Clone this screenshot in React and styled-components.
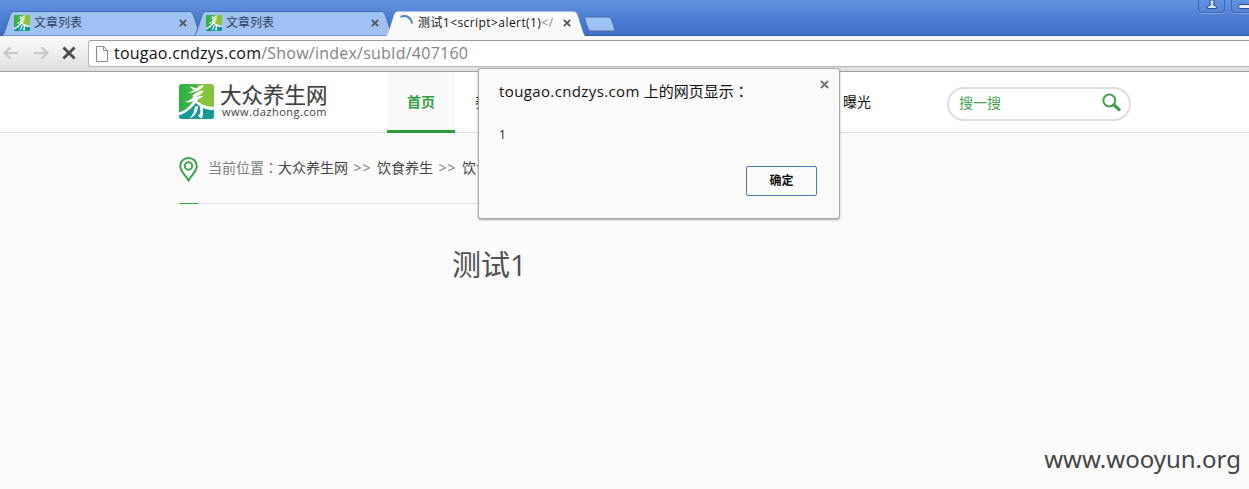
import React from 'react';
import styled, { createGlobalStyle, css } from 'styled-components';

const Global = createGlobalStyle`
  * { box-sizing: border-box; }
  html, body { margin: 0; padding: 0; overflow: hidden; }
  body {
    font-family: "Open Sans", "Noto Sans CJK SC", sans-serif;
    background: #fbfbfb;
  }
  svg { display: block; flex: none; }
`;

const Screen = styled.div`
  position: relative;
  width: 1249px;
  height: 489px;
  overflow: hidden;
  display: flex;
  flex-direction: column;
  background: #fbfbfb;
`;

/* browser chrome */
const TabStrip = styled.div`
  height: 36px;
  flex: none;
  display: flex;
  align-items: flex-end;
  background: linear-gradient(#6293e0, #4a7ad0 60%, #426fc6);
  border-bottom: 1px solid #38599a;
  padding-left: 2px;
`;

const TabBox = styled.div`
  position: relative;
  width: 199px;
  height: 24px;
  margin-right: -7px;
  z-index: 1;
  display: flex;
  align-items: center;
  padding: 0 14px 0 12px;
  ${(p) => p.$active && css`
    height: 25px;
    margin-bottom: -1px;
    padding-bottom: 1px;
    z-index: 2;
  `}
`;

const TabShape = styled.svg`
  position: absolute;
  left: 0;
  top: 0;
  z-index: -1;
`;

const TabTitle = styled.span`
  flex: 1;
  margin-left: 4px;
  font-size: 12px;
  line-height: 20px;
  height: 21px;
  white-space: nowrap;
  overflow: hidden;
  color: ${(p) => (p.$active ? '#111' : '#2b3d57')};
  letter-spacing: ${(p) => (p.$active ? '0.43px' : '0')};
`;

const Faded = styled.span`
  color: #888;
`;

const NewTab = styled.div`
  margin: 0 0 3px 2px;
`;

const WindowButtons = styled.div`
  align-self: flex-start;
  margin-left: auto;
  display: flex;
  gap: 6px;
  height: 13px;
`;

const WindowButton = styled.div`
  width: 27px;
  height: 13px;
  display: flex;
  justify-content: center;
  border: 1px solid #3f65ae;
  border-top: 0;
  border-radius: 0 0 4px 4px;
  box-shadow: 0 1px 0 #7fa6e6;
  ${(p) => p.$cut && css`
    width: 18px;
    border-right: 0;
    border-radius: 0 0 0 4px;
    justify-content: flex-end;
  `}
`;

const Toolbar = styled.div`
  height: 36px;
  flex: none;
  display: flex;
  align-items: flex-start;
  background: linear-gradient(#fafafa, #dfdfdf);
  border-bottom: 1px solid #a3a0a0;
  padding: 4px 0 0 3px;
`;

const NavIcons = styled.div`
  height: 26px;
  width: 85px;
  display: flex;
  align-items: center;
  gap: 13.500px;
`;

const Omnibox = styled.div`
  flex: 1;
  height: 27px;
  display: flex;
  align-items: center;
  padding-left: 7px;
  background: #fff;
  border: 1px solid #b9b5b5;
  border-top-color: #a09a9a;
  border-right: 0;
  border-radius: 3px 0 0 3px;
`;

const Url = styled.span`
  margin: 0 0 1px 6px;
  font-size: 16px;
  line-height: 24px;
  letter-spacing: 0.23px;
  color: #838383;
  white-space: nowrap;
`;

const Host = styled.span`
  color: #111;
`;

/* site */
const SiteHeader = styled.header`
  height: 61px;
  flex: none;
  display: flex;
  align-items: flex-start;
  padding-left: 179px;
  background: #fff;
  border-bottom: 1px solid #dfdfdf;
`;

const Brand = styled.div`
  width: 208px;
  display: flex;
  gap: 6px;
  padding-top: 12px;
`;

const BrandText = styled.div`
  display: flex;
  flex-direction: column;
  margin-top: -1px;
  color: #3d3d3d;
  white-space: nowrap;
`;

const BrandName = styled.div`
  font-family: "Noto Sans CJK SC", sans-serif;
  font-size: 21.500px;
  line-height: 22px;
  -webkit-text-stroke: 0.2px #3d3d3d;
`;

const BrandUrl = styled.div`
  margin-left: 2px;
  font-size: 11px;
  line-height: 14px;
  letter-spacing: 0.5px;
`;

const Nav = styled.nav`
  width: 504px;
  display: flex;
`;

const NavItem = styled.a`
  height: 61px;
  padding: 0 20px;
  font-size: 14px;
  line-height: 60px;
  color: #111;
  white-space: nowrap;
  ${(p) => p.$current && css`
    color: #319e3e;
    font-weight: 700;
    background: #fafafa;
    border-bottom: 3px solid #319e3e;
  `}
  ${(p) => p.$last && css`margin-left: auto;`}
`;

const Search = styled.div`
  width: 184px;
  height: 34px;
  margin: 15px 0 0 56px;
  display: flex;
  align-items: center;
  justify-content: space-between;
  padding: 0 8px 3px 10px;
  border: 2px solid #dedede;
  border-radius: 17px;
  font-size: 14px;
  line-height: 20px;
  color: #47a655;
`;

const Main = styled.main`
  flex: 1;
  display: flex;
  flex-direction: column;
  padding-left: 179px;
`;

const Crumbs = styled.div`
  width: 640px;
  height: 71px;
  flex: none;
  display: flex;
  align-items: center;
  font-size: 14px;
  line-height: 20px;
  color: #7c7c7c;
  white-space: nowrap;
  border-bottom: 1px solid #e2e2e2;
  & > svg { margin-top: 2px; }
`;

const CrumbLabel = styled.span`
  height: 20px;
  margin-left: 10px;
  width: 70px;
`;

const WideColon = styled.span`
  font-family: "Noto Sans CJK TC", sans-serif;
  line-height: 1;
`;

const Crumb = styled.span`
  height: 20px;
  color: #444;
`;

const Sep = styled.span`
  height: 20px;
  width: 29px;
  text-align: center;
  letter-spacing: 1px;
  font-size: 14px;
`;

const Accent = styled.div`
  position: relative;
  flex: none;
  width: 19px;
  height: 1px;
  margin-top: -1px;
  background: #35a548;
`;

const Title = styled.h1`
  margin: 40px 0 0 273px;
  font-size: 29px;
  font-weight: 400;
  line-height: 42px;
  color: #505050;
`;

const Watermark = styled.div`
  margin: auto 8px 13px auto;
  font-family: "Noto Sans", sans-serif;
  font-size: 24px;
  line-height: 34px;
  color: #444;
`;

/* alert window */
const Dialog = styled.section`
  position: absolute;
  left: 478px;
  top: 68px;
  width: 362px;
  height: 151px;
  z-index: 5;
  display: flex;
  flex-direction: column;
  padding: 11px 22px 22px 20px;
  background: #fbfbfb;
  border: 1px solid #a9a9a9;
  border-radius: 3px;
  box-shadow: 0 1px 2px rgba(0, 0, 0, 0.35);
`;

const DialogHead = styled.div`
  display: flex;
  justify-content: space-between;
  margin-right: -12px;
  height: 22px;
  font-size: 15px;
  line-height: 22px;
  color: #111;
`;

const Origin = styled.span`
  letter-spacing: 0.38px;
`;

const DialogMessage = styled.div`
  margin-top: 23px;
  font-size: 12px;
  line-height: 20px;
  color: #222;
`;

const Confirm = styled.button`
  width: 71px;
  height: 30px;
  margin: auto 0 0 auto;
  padding: 0 0 2px;
  font: 700 12px "Open Sans", "Noto Sans CJK SC", sans-serif;
  color: #111;
  background: #fbfbfb;
  border: 1px solid #4878c4;
  border-radius: 2px;
`;

const Cross = ({ size = 8, color = '#555', width = 1.8 }) => (
  <svg width={size} height={size} viewBox="0 0 8 8">
    <path d="M.8.8l6.4 6.4M7.2.8L.8 7.2" stroke={color} strokeWidth={width} />
  </svg>
);

const LogoMark = ({ size, id }) => (
  <svg width={size} height={size} viewBox="0 0 35 35">
    <defs>
      <linearGradient id={id}>
        <stop offset="0" stopColor="#2fae48" />
        <stop offset=".48" stopColor="#4db648" />
        <stop offset=".58" stopColor="#8dc63f" />
        <stop offset="1" stopColor="#86bf3d" />
      </linearGradient>
      <clipPath id={id + 'c'}><rect width="35" height="35" rx="3" /></clipPath>
    </defs>
    <g clipPath={`url(#${id}c)`}>
      <rect width="35" height="35" fill={`url(#${id})`} />
      <path d="M0 35V29C7 27 13 22 18 17.500C23 21.500 29 23 35 23V35Z" fill="#159a94" />
      <g fill="#fff">
        <path d="M11 2.500C14 3 16 4 17.500 4.500C19 3 21 1.300 25 1.200C24 3.500 21 5.500 18.500 7C15 8.500 12 9 9 8.500C12 8 14 7 15 6C13 5.200 12 4 11 2.500Z" />
        <path d="M14 11C17 8.500 21 6.800 25 6.600C24 9 20 11 17 13.200C20 12 22 11.800 24 12.200C21 14.500 18 16 15.500 16.800C11 18.500 8 18.800 6 17.800C10 17 13 14.500 15 12.500C13.500 12.500 12.500 12 14 11Z" />
        <path d="M16 15L19.500 14.500C17 20 10 28 0 31.500V28.500C7 26.500 12 21 16 15Z" />
        <path d="M17.500 16.500C22 20.500 28 23 35 22.800V25.800C27 26.500 21 23 17 19Z" />
        <path d="M16 22.500L19 22C18.500 27 17 32 10.500 34.500C14 31 15.500 27 16 22.500Z" />
        <path d="M20.500 22L24 24C24 28 24.500 32 22.500 34.500C21.500 34 20 33 19 31.500C22 31 21.500 26 20.500 22Z" />
      </g>
    </g>
  </svg>
);

const Tab = ({ active, icon, children }) => (
  <TabBox $active={active}>
    <TabShape width="199" height="25" viewBox="0 0 199 25">
      <path
        d="M0 25C2 23 2.500 21 3.500 18L8 4C9 1.500 10 .5 12.500 .5H187C189.500 .5 190.500 1.500 191.500 4L196 18C197 21 197.500 23 199 25Z"
        fill={active ? '#fafafa' : '#a0c2f3'}
        stroke={active ? 'none' : '#4468a8'}
      />
    </TabShape>
    {icon}
    <TabTitle $active={active}>{children}</TabTitle>
    <Cross />
  </TabBox>
);

const Spinner = () => (
  <svg width="16" height="16" viewBox="0 0 16 16">
    <path d="M2.500 1.800C8-.5 13.500 2.500 14 8.500" fill="none" stroke="#4a80cc" strokeWidth="2" />
  </svg>
);

const Arrow = ({ flip }) => (
  <svg width="16" height="14" viewBox="0 0 16 14">
    <path
      d="M15 7H2M7.500 1.200L1.700 7L7.500 12.800"
      fill="none"
      stroke="#c6c6c6"
      strokeWidth="2.200"
      transform={flip ? 'matrix(-1 0 0 1 16 0)' : undefined}
    />
  </svg>
);

export default function App() {
  return (
    <Screen>
      <Global />
      <TabStrip>
        <Tab icon={<LogoMark size={16} id="m1" />}>文章列表</Tab>
        <Tab icon={<LogoMark size={16} id="m2" />}>文章列表</Tab>
        <Tab active icon={<Spinner />}>
          测试1&lt;script&gt;alert(1)<Faded>&lt;/</Faded>
        </Tab>
        <NewTab>
          <svg width="38" height="16" viewBox="0 0 38 16">
            <path d="M6.500 1H28C30 1 31 2 31.700 4L34.500 12C35 14 34.500 15 33 15H12C10 15 9 14.500 8 12.500L5 4C4.300 2 4.800 1 6.500 1Z" fill="#a0c2f3" stroke="#4468a8" />
          </svg>
        </NewTab>
        <WindowButtons>
          <WindowButton>
            <svg width="12" height="10" viewBox="0 0 12 10">
              <path d="M4 0H8V3.500H7.500V5L10.500 6.500V8.500H1.500V6.500L4.500 5V3.500H4Z" fill="#d5e3f7" stroke="#2f4f8d" />
            </svg>
          </WindowButton>
          <WindowButton $cut>
            <svg width="11" height="10" viewBox="0 0 11 10">
              <path d="M12 4.500H2Q.5 4.500 .5 6.500T2 8.500H12" fill="#e6eefa" stroke="#2f4f8d" />
            </svg>
          </WindowButton>
        </WindowButtons>
      </TabStrip>
      <Toolbar>
        <NavIcons>
          <Arrow />
          <Arrow flip />
          <Cross size={14} color="#4c4c4c" width={1.6} />
        </NavIcons>
        <Omnibox>
          <svg width="12" height="16" viewBox="0 0 12 16">
            <path d="M.5 .5H7.500L11.500 4.500V15.500H.5ZM7.500 .5V4.500H11.500" fill="#fff" stroke="#8b8b8b" />
          </svg>
          <Url><Host>tougao.cndzys.com</Host>/Show/index/subId/407160</Url>
        </Omnibox>
      </Toolbar>

      <SiteHeader>
        <Brand>
          <LogoMark size={35} id="logo" />
          <BrandText>
            <BrandName>大众养生网</BrandName>
            <BrandUrl>www.dazhong.com</BrandUrl>
          </BrandText>
        </Brand>
        <Nav>
          <NavItem $current>首页</NavItem>
          <NavItem>养生</NavItem>
          <NavItem $last>曝光</NavItem>
        </Nav>
        <Search>
          搜一搜
          <svg width="19" height="19" viewBox="0 0 19 19">
            <circle cx="7.300" cy="7.500" r="5.900" fill="none" stroke="#3fa24d" strokeWidth="2" />
            <path d="M11.800 11.800L17 16.500" stroke="#3fa24d" strokeWidth="3.200" strokeLinecap="round" />
          </svg>
        </Search>
      </SiteHeader>

      <Main>
        <Crumbs>
          <svg width="19" height="25" viewBox="0 0 19 25">
            <path d="M9.500 23.500C7 19 1.200 14.500 1.200 9A8.300 8 0 0 1 17.800 9C17.800 14.500 12 19 9.500 23.500Z" fill="none" stroke="#3fa24d" strokeWidth="2" />
            <circle cx="9.500" cy="9" r="3.700" fill="none" stroke="#3fa24d" strokeWidth="2" />
          </svg>
          <CrumbLabel>当前位置<WideColon>：</WideColon></CrumbLabel>
          <Crumb>大众养生网</Crumb>
          <Sep>&gt;&gt;</Sep>
          <Crumb>饮食养生</Crumb>
          <Sep>&gt;&gt;</Sep>
          <Crumb>饮食</Crumb>
        </Crumbs>
        <Accent />
        <Title>测试1</Title>
        <Watermark>www.wooyun.org</Watermark>
      </Main>

      <Dialog>
        <DialogHead>
          <span><Origin>tougao.cndzys.com</Origin> 上的网页显示<WideColon>：</WideColon></span>
          <Cross size={9} color="#777" width={1.900} />
        </DialogHead>
        <DialogMessage>1</DialogMessage>
        <Confirm>确定</Confirm>
      </Dialog>
    </Screen>
  );
}
